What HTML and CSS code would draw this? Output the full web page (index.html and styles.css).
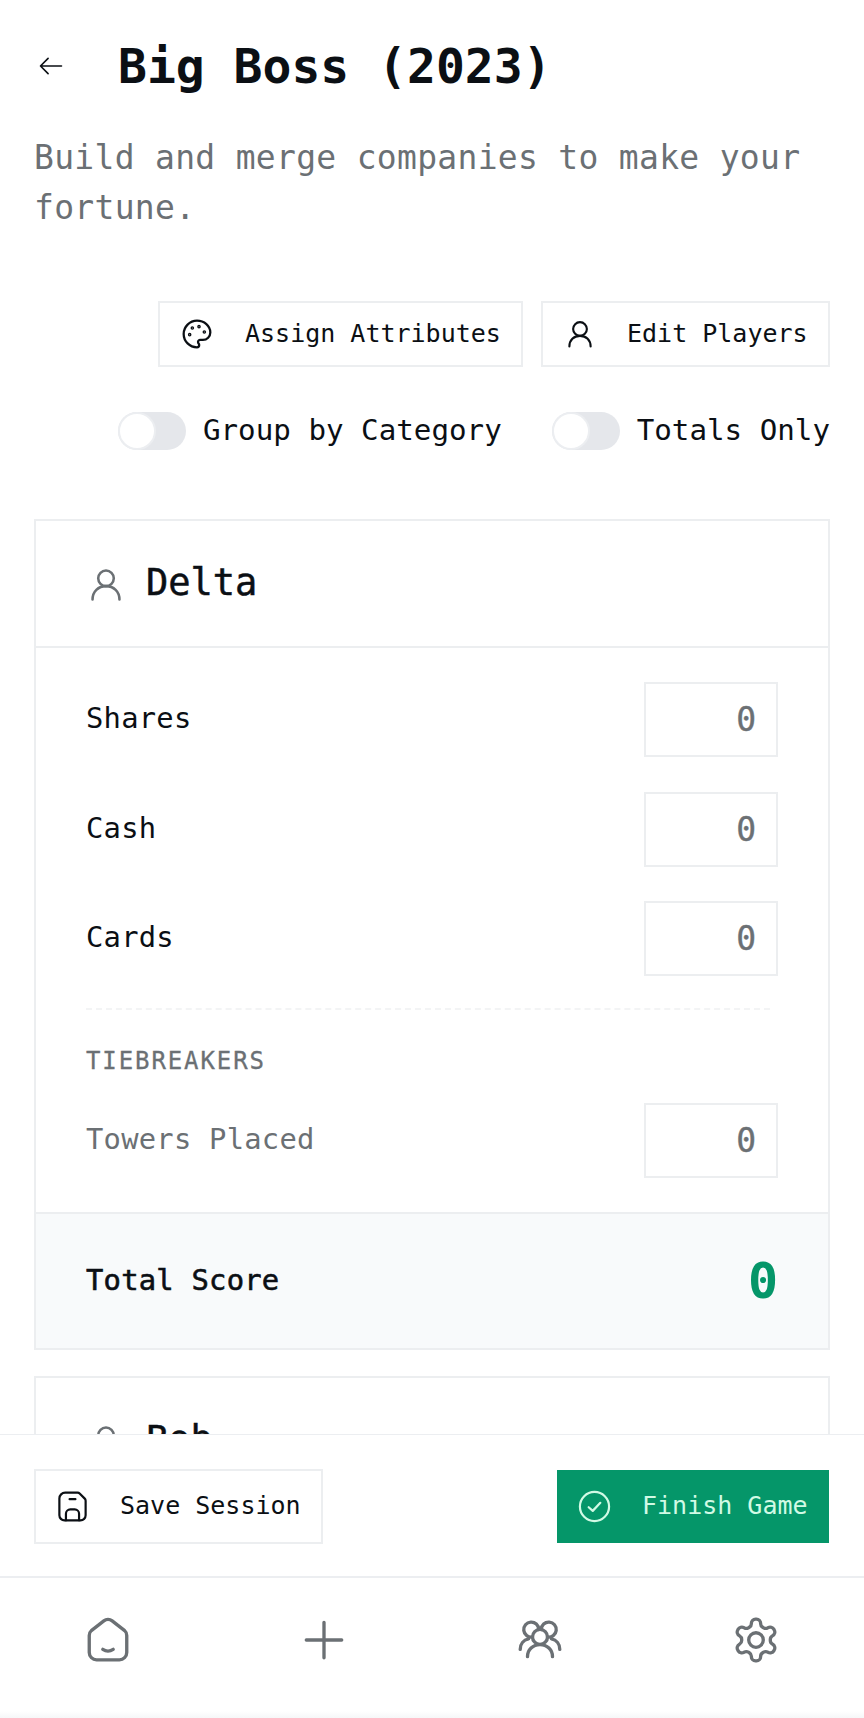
FILE: index.html
```html
<!DOCTYPE html>
<html lang="en">
<head>
<meta charset="utf-8">
<title>Big Boss (2023)</title>
<link rel="stylesheet" href="styles.css">
</head>
<body>
<div class="app">
  <main class="content">
    <header class="head">
      <svg class="back" viewBox="0 0 24 24"><path d="M21 12H3M9.500 5.500L3 12l6.500 6.500"/></svg>
      <h1 class="title">Big Boss (2023)</h1>
    </header>
    <p class="sub">Build and merge companies to make your fortune.</p>
    <div class="actions">
      <button class="btn btn-assign">
        <svg class="ico ico-palette" viewBox="0 0 24 24"><circle cx="13.5" cy="6.5" r=".5"/><circle cx="17.5" cy="10.5" r=".5"/><circle cx="8.5" cy="7.5" r=".5"/><circle cx="6.5" cy="12.5" r=".5"/><path d="M12 2C6.5 2 2 6.5 2 12s4.500 10 10 10c.926 0 1.648-.746 1.648-1.688 0-.437-.18-.835-.437-1.125-.29-.289-.438-.652-.438-1.125a1.640 1.640 0 0 1 1.668-1.668h1.996c3.051 0 5.555-2.503 5.555-5.554C21.965 6.012 17.461 2 12 2z"/></svg>
        <span>Assign Attributes</span>
      </button>
      <button class="btn btn-edit">
        <svg class="ico" viewBox="0 0 24 24"><circle cx="12" cy="8" r="5.5"/><path d="M3.500 22c0-5 3.500-8.500 8.500-8.500s8.500 3.500 8.500 8.500"/></svg>
        <span>Edit Players</span>
      </button>
    </div>
    <div class="toggles">
      <label class="toggle"><span class="switch"><span class="knob"></span></span><span class="toggle-text">Group by Category</span></label>
      <label class="toggle"><span class="switch"><span class="knob"></span></span><span class="toggle-text">Totals Only</span></label>
    </div>

    <section class="card">
      <div class="card-head">
        <svg class="card-ico" viewBox="0 0 24 24"><circle cx="12" cy="8" r="5.500"/><path d="M2.500 23c0-5.500 4-9.500 9.500-9.500s9.500 4 9.500 9.500"/></svg>
        <h2 class="name">Delta</h2>
      </div>
      <div class="card-body">
        <div class="row"><span class="label">Shares</span><input class="num" type="text" value="0"></div>
        <div class="row"><span class="label">Cash</span><input class="num" type="text" value="0"></div>
        <div class="row"><span class="label">Cards</span><input class="num" type="text" value="0"></div>
        <div class="rule"></div>
        <div class="tie-title">TIEBREAKERS</div>
        <div class="row row-tie"><span class="label label-muted">Towers Placed</span><input class="num" type="text" value="0"></div>
      </div>
      <div class="total"><span class="total-label">Total Score</span><span class="total-value">0</span></div>
    </section>

    <section class="card">
      <div class="card-head">
        <svg class="card-ico" viewBox="0 0 24 24"><circle cx="12" cy="8" r="5.500"/><path d="M2.500 23c0-5.500 4-9.500 9.500-9.500s9.500 4 9.500 9.500"/></svg>
        <h2 class="name">Bob</h2>
      </div>
    </section>
  </main>

  <div class="dock">
    <div class="bar">
      <button class="btn btn-save">
        <svg class="ico ico-large" viewBox="0 0 24 24"><path d="M7 2.500h8.500a2 2 0 0 1 1.400.6l3.500 3.500a2 2 0 0 1 .6 1.400V18a3.500 3.500 0 0 1-3.500 3.500H6.500A3.500 3.500 0 0 1 3 18V6.500a4 4 0 0 1 4-4z"/><path d="M7.500 21.500V17a3 3 0 0 1 3-3h3a3 3 0 0 1 3 3v4.500M10 7h4"/></svg>
        <span>Save Session</span>
      </button>
      <button class="btn btn-finish">
        <svg class="ico ico-large" viewBox="0 0 24 24"><circle cx="12" cy="12" r="10"/><path d="M8 12.500l2.800 2.500 5.200-5.500"/></svg>
        <span>Finish Game</span>
      </button>
    </div>
    <nav class="nav">
      <a class="nav-item"><svg class="nav-ico" viewBox="0 0 24 24"><path d="M10 2.800a3.200 3.200 0 0 1 4 0l6 4.700a3 3 0 0 1 1 2.300V18a3.500 3.500 0 0 1-3.500 3.500h-11A3.500 3.500 0 0 1 3 18V9.800a3 3 0 0 1 1-2.300z"/><path d="M9.500 16.500c1.500 1 3.500 1 5 0"/></svg></a>
      <a class="nav-item"><svg class="nav-ico" viewBox="0 0 24 24"><path d="M12 3.500v17M3.500 12h17"/></svg></a>
      <a class="nav-item"><svg class="nav-ico" viewBox="0 0 24 24"><path d="M11.400 6.950A3.600 3.600 0 1 0 8.400 10.550M12.600 6.950A3.600 3.600 0 1 1 15.600 10.550"/><circle cx="12" cy="10.500" r="3.600"/><path d="M2.500 16.500c0-2.600 1.600-4.500 4-5M21.500 16.500c0-2.600-1.600-4.500-4-5M6 20c0-3.300 2.600-5.800 6-5.800s6 2.500 6 5.800"/></svg></a>
      <a class="nav-item"><svg class="nav-ico" viewBox="0 0 24 24"><path d="M12.220 2h-.44a2 2 0 0 0-2 2v.18a2 2 0 0 1-1 1.730l-.43.25a2 2 0 0 1-2 0l-.15-.08a2 2 0 0 0-2.730.73l-.22.38a2 2 0 0 0 .73 2.730l.15.1a2 2 0 0 1 1 1.720v.51a2 2 0 0 1-1 1.740l-.15.09a2 2 0 0 0-.73 2.730l.22.38a2 2 0 0 0 2.730.73l.15-.08a2 2 0 0 1 2 0l.43.25a2 2 0 0 1 1 1.730V20a2 2 0 0 0 2 2h.44a2 2 0 0 0 2-2v-.18a2 2 0 0 1 1-1.730l.43-.25a2 2 0 0 1 2 0l.15.08a2 2 0 0 0 2.730-.73l.22-.39a2 2 0 0 0-.73-2.730l-.15-.08a2 2 0 0 1-1-1.740v-.5a2 2 0 0 1 1-1.740l.15-.09a2 2 0 0 0 .73-2.730l-.22-.38a2 2 0 0 0-2.730-.73l-.15.08a2 2 0 0 1-2 0l-.43-.25a2 2 0 0 1-1-1.730V4a2 2 0 0 0-2-2z"/><circle cx="12" cy="12" r="3.500"/></svg></a>
    </nav>
  </div>
</div>
</body>
</html>
```
FILE: styles.css
```css
* { box-sizing: border-box; }
html, body { margin: 0; padding: 0; background: #fff; }
body { font-family: "DejaVu Sans Mono", "Liberation Mono", monospace; color: #0b0f14; }
svg { fill: none; stroke: currentColor; stroke-linecap: round; stroke-linejoin: round; flex: none; }
button { font: inherit; color: inherit; background: #fff; cursor: pointer; }

.app { position: relative; width: 864px; height: 1718px; overflow: hidden; background: #fff; }
.content { padding: 32px 34px 0; }

.head { display: flex; align-items: center; height: 68px; gap: 53px; padding-left: 1px; }
.back { width: 28px; height: 28px; stroke-width: 1.400; margin-left: 2px; }
.title { margin: 0; font-size: 48px; line-height: 68px; font-weight: 700; letter-spacing: 0; }
.sub { margin: 33px 0 0; font-size: 33px; line-height: 50px; color: #6b7074; letter-spacing: .3px; }

.actions { display: flex; justify-content: flex-end; gap: 18px; margin-top: 68px; }
.btn { display: flex; align-items: center; border: 2px solid #eceef0; border-radius: 0; padding: 0; }
.btn span { padding-bottom: 2px; }
.ico { width: 30px; height: 30px; stroke-width: 1.700; }
.ico-palette { width: 32px; height: 32px; }
.ico-large { width: 35px; height: 35px; stroke-width: 1.500; }
.btn-assign { height: 66px; width: 365px; padding-left: 21px; gap: 32px; font-size: 25px; }
.btn-edit { height: 66px; width: 289px; padding-left: 22px; gap: 32px; font-size: 25px; }

.toggles { display: flex; justify-content: flex-end; gap: 50px; margin-top: 45px; font-size: 29.200px; height: 38px; }
.toggle { display: flex; align-items: center; gap: 17px; }
.toggle-text { padding-bottom: 2px; }
.switch { display: block; width: 68px; height: 38px; border-radius: 19px; background: #e5e7eb; }
.knob { display: block; width: 38px; height: 38px; border-radius: 50%; background: #fff; border: 2px solid #eceef1; }

.card { border: 2px solid #eceef0; margin-top: 69px; }
.card + .card { margin-top: 26px; }
.card-head { display: flex; align-items: center; height: 127px; padding-left: 53px; gap: 23px; border-bottom: 2px solid #eceef0; padding-bottom: 2px; }
.card-ico { width: 34px; height: 36px; stroke-width: 1.800; color: #6b7074; margin-top: 2px; }
.name { margin: 0; font-size: 37px; line-height: 50px; font-weight: 400; -webkit-text-stroke: .5px currentColor; }

.card-body { padding: 34px 50px 34px 50px; }
.row { display: flex; align-items: center; justify-content: space-between; height: 75px; margin-bottom: 34.500px; }
.label { font-size: 28.800px; letter-spacing: .25px; padding-bottom: 3px; }
.label-muted { color: #6b7074; }
.num { width: 134px; height: 75px; border: 2px solid #eceef0; background: #fff; text-align: right; padding: 0 20px 0 0; font: inherit; font-size: 33px; color: #6b7074; border-radius: 0; outline: none; -webkit-text-stroke: .4px currentColor; }

.rule { margin: -2.500px 8px 0 0; border-top: 2px dashed #f3f4f5; }
.tie-title { margin-top: 35px; font-size: 24px; line-height: 32px; letter-spacing: 1.900px; color: #6b7074; font-weight: 400; -webkit-text-stroke: .3px currentColor; }
.row-tie { margin: 26px 0 0; }

.total { display: flex; align-items: center; justify-content: space-between; height: 136px; padding: 0 50px 0 50px; background: #f8fafb; border-top: 2px solid #eceef0; }
.total-label { font-size: 28.800px; font-weight: 400; letter-spacing: .25px; -webkit-text-stroke: .6px currentColor; padding-bottom: 2px; }
.total-value { font-size: 50px; font-weight: 700; color: #059669; }

.dock { position: absolute; left: 0; right: 0; bottom: 0; height: 284px; background: #fff; border-top: 1px solid #eceef1; }
.bar { display: flex; align-items: center; justify-content: space-between; height: 143px; padding: 2px 35px 0 34px; border-bottom: 2px solid #eceef1; }
.btn-save { height: 75px; width: 289px; padding-left: 19px; gap: 30px; font-size: 25px; }
.btn-finish { height: 73px; width: 272px; padding-left: 20px; gap: 30px; font-size: 25px; background: #059669; border: 0; color: #d1fae5; }

.nav { display: grid; grid-template-columns: repeat(4, 216px); height: 140px; background: linear-gradient(#fff 133px, #f6f7f8); }
.nav-item { display: flex; justify-content: center; padding-top: 37px; color: #6b7074; }
.nav-ico { width: 50px; height: 50px; stroke-width: 1.600; }
```
